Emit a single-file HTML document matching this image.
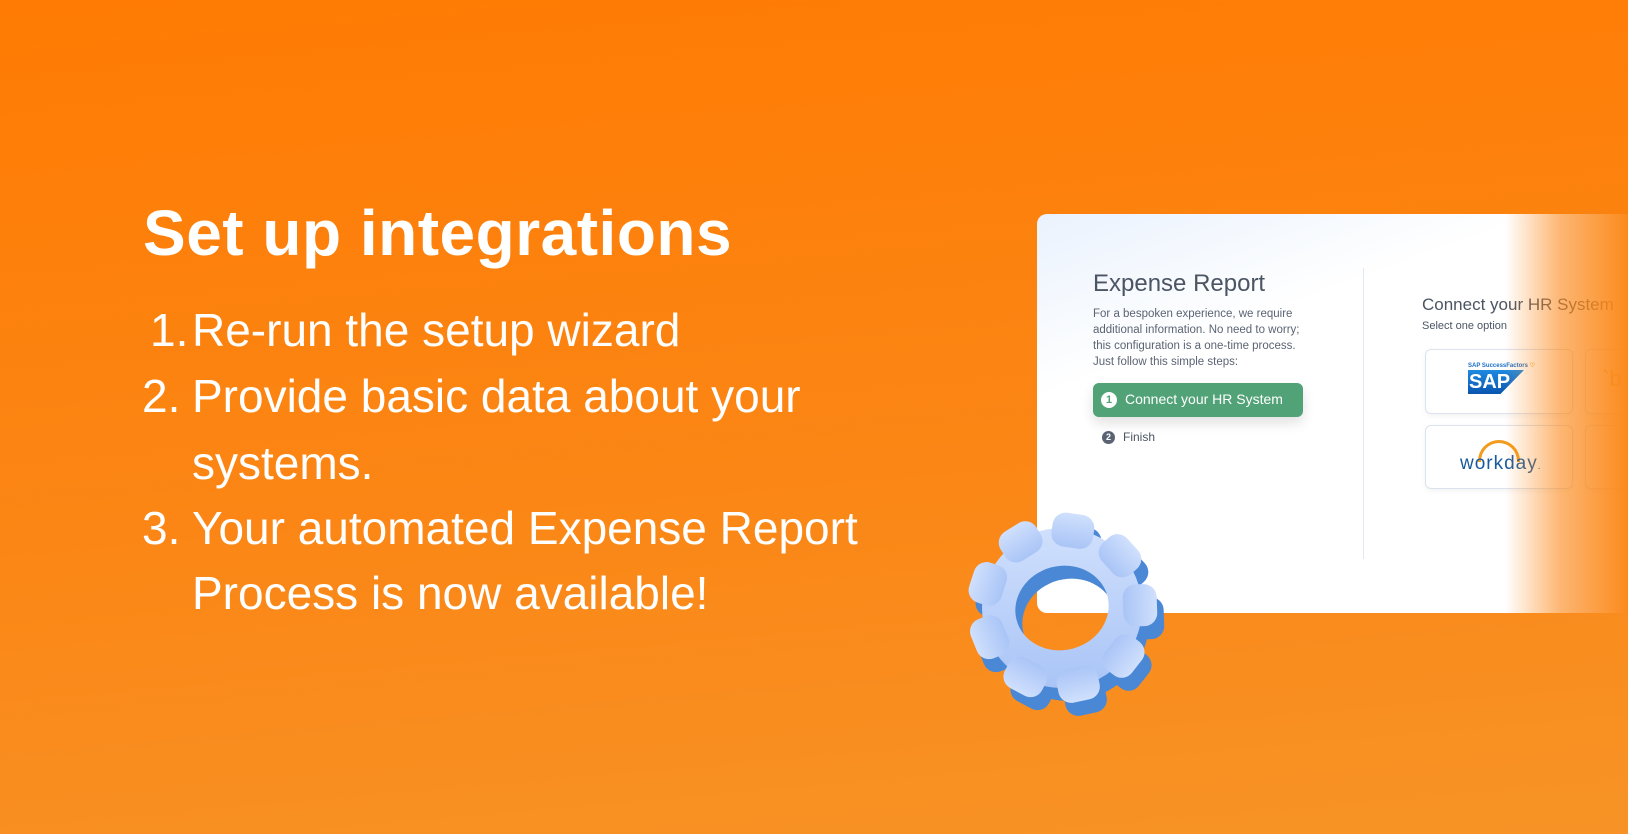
<!DOCTYPE html>
<html><head><meta charset="utf-8"><style>
*{margin:0;padding:0;box-sizing:border-box}
body{width:1628px;height:834px;overflow:hidden;position:relative;font-family:"Liberation Sans",sans-serif;
background:linear-gradient(175deg,#ff7b03 0%,#fb8615 55%,#f79326 100%);}
.h{position:absolute;left:143px;top:196px;font-size:64px;font-weight:bold;color:#fff;letter-spacing:0.5px}
.li{position:absolute;color:#fff;font-size:46px;line-height:1}
.card{position:absolute;left:1037px;top:214px;width:600px;height:399px;border-radius:10px;
background:linear-gradient(160deg,#eaf2fd 0%,#fff 30%);overflow:hidden}
.fade{position:absolute;left:1505px;top:214px;width:123px;height:399px;background:linear-gradient(90deg,rgba(251,134,21,0) 0%,rgba(251,134,21,.6) 45%,#fb8a1c 100%)}
.c{position:absolute;color:#4b5563}
.btn{position:absolute;left:56px;top:169px;width:210px;height:34px;border-radius:6px;background:#51a277;color:#fff;font-size:14px;box-shadow:0 6px 12px rgba(0,0,0,.12)}
.opt{position:absolute;border:1px solid #dbe3ee;border-radius:6px;background:#fff;box-shadow:0 2px 6px rgba(0,0,0,.05)}
</style></head><body>
<div class="h">Set up integrations</div>
<div class="li" style="left:150px;top:307px">1.</div><div class="li" style="left:192px;top:307px">Re-run the setup wizard</div>
<div class="li" style="left:142px;top:373px">2.</div><div class="li" style="left:192px;top:373px">Provide basic data about your</div>
<div class="li" style="left:192px;top:440px">systems.</div>
<div class="li" style="left:142px;top:505px">3.</div><div class="li" style="left:192px;top:505px">Your automated Expense Report</div>
<div class="li" style="left:192px;top:570px">Process is now available!</div>

<div class="card">
 <div class="c" style="left:56px;top:56px;font-size:24px;color:#4b5563">Expense Report</div>
 <div class="c" style="left:56px;top:92px;font-size:11.5px;line-height:16px;width:222px;color:#5b6473">For a bespoken experience, we require additional information. No need to worry; this configuration is a one-time process. Just follow this simple steps:</div>
 <div class="btn"><span style="position:absolute;left:8px;top:9px;width:16px;height:16px;border-radius:50%;background:#fff;color:#51a277;font-size:11px;font-weight:bold;text-align:center;line-height:16px">1</span><span style="position:absolute;left:32px;top:8px">Connect your HR System</span></div>
 <div class="c" style="left:65px;top:217px;width:13px;height:13px;border-radius:50%;background:#5a6372;color:#fff;font-size:9px;font-weight:bold;text-align:center;line-height:13px">2</div>
 <div class="c" style="left:86px;top:216px;font-size:12px">Finish</div>
 <div style="position:absolute;left:326px;top:54px;width:1px;height:291px;background:#e2e8f0"></div>
 <div class="c" style="left:385px;top:81px;font-size:17px">Connect your HR System</div>
 <div class="c" style="left:385px;top:106px;font-size:11px">Select one option</div>
 <div class="opt" style="left:388px;top:135px;width:148px;height:65px">
  <div style="position:absolute;left:42px;top:12px;font-size:6px;color:#1a6fc4;font-weight:bold">SAP SuccessFactors <span style="color:#f5a623">♡</span></div>
  <div style="position:absolute;left:42px;top:20px;width:56px;height:24px;background:linear-gradient(180deg,#1e8ae0,#0a55b0);clip-path:polygon(0 0,100% 0,58% 100%,0 100%);color:#fff;font-weight:bold;font-size:20px;line-height:24px;padding-left:1px">SAP</div>
 </div>
 <div class="opt" style="left:548px;top:135px;width:148px;height:65px"><span style="position:absolute;left:16px;top:16px;color:#e8a23a;font-size:22px">`b</span></div>
 <div class="opt" style="left:388px;top:211px;width:148px;height:64px">
  <div style="position:absolute;left:52px;top:14px;width:42px;height:22px;border:3px solid #f39b1c;border-bottom:none;border-radius:21px 21px 0 0"></div>
  <div style="position:absolute;left:34px;top:27px;font-size:19px;color:#1a5a9c;letter-spacing:1px">workday<span style="font-size:10px">.</span></div>
 </div>
 <div class="opt" style="left:548px;top:211px;width:148px;height:64px"></div>
</div>
<div class="fade"></div>

<svg style="position:absolute;left:962px;top:508px" width="210" height="210" viewBox="0 0 210 210">
<defs>
 <linearGradient id="lg" x1="0" y1="0" x2="0" y2="1"><stop offset="0" stop-color="#d0e0fd"/><stop offset="1" stop-color="#a9c4f6"/></linearGradient>
 <mask id="m" maskUnits="userSpaceOnUse" x="-20" y="-20" width="260" height="260">
  <rect x="-20" y="-20" width="260" height="260" fill="#fff"/>
  <ellipse cx="100" cy="100" rx="47" ry="42" transform="rotate(-15 100 100)" fill="#000"/>
 </mask>
 <g id="gear">
  <g mask="url(#m)">
   <circle cx="100" cy="100" r="80"/>
   <g transform="rotate(8 100 100)">
    <rect x="79" y="5" width="42" height="34" rx="13"/>
    <rect x="79" y="5" width="42" height="34" rx="13" transform="rotate(40 100 100)"/>
    <rect x="79" y="5" width="42" height="34" rx="13" transform="rotate(80 100 100)"/>
    <rect x="79" y="5" width="42" height="34" rx="13" transform="rotate(120 100 100)"/>
    <rect x="79" y="5" width="42" height="34" rx="13" transform="rotate(160 100 100)"/>
    <rect x="79" y="5" width="42" height="34" rx="13" transform="rotate(200 100 100)"/>
    <rect x="79" y="5" width="42" height="34" rx="13" transform="rotate(240 100 100)"/>
    <rect x="79" y="5" width="42" height="34" rx="13" transform="rotate(280 100 100)"/>
    <rect x="79" y="5" width="42" height="34" rx="13" transform="rotate(320 100 100)"/>
   </g>
  </g>
 </g>
</defs>
<use href="#gear" transform="translate(7,13)" fill="#4a88d6"/>
<use href="#gear" fill="url(#lg)"/>
</svg>
</body></html>
